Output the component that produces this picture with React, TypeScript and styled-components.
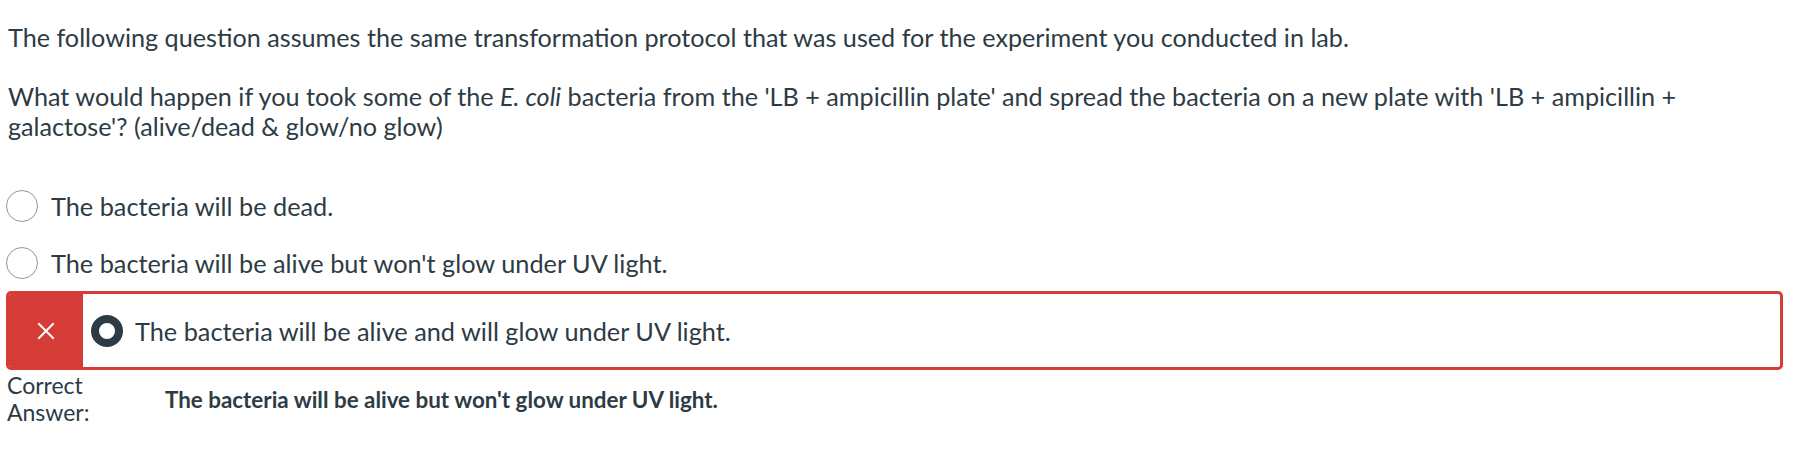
import React from 'react';
import styled, { createGlobalStyle } from 'styled-components';

const GlobalStyle = createGlobalStyle`
  html, body {
    margin: 0;
    padding: 0;
    background: #ffffff;
  }
  body {
    font-family: Lato, "Open Sans", "Liberation Sans", sans-serif;
    color: #2d3b45;
  }
`;

const answers = [
  { id: 'a1', text: 'The bacteria will be dead.' },
  { id: 'a2', text: "The bacteria will be alive but won't glow under UV light." },
];

export default function App() {
  return (
    <>
      <GlobalStyle />
      <Page>
        <Question>
          <Para>
            The following question assumes the same transformation protocol that was used for the
            experiment you conducted in lab.
          </Para>
          <Para>
            What would happen if you took some of the <em>E. coli</em> bacteria from the 'LB +
            ampicillin plate' and spread the bacteria on a new plate with 'LB + ampicillin +
            galactose'? (alive/dead &amp; glow/no glow)
          </Para>
        </Question>

        <AnswerList>
          {answers.map((a) => (
            <AnswerRow key={a.id}>
              <Radio />
              <AnswerText>{a.text}</AnswerText>
            </AnswerRow>
          ))}

          <WrongBox>
            <Arrow>
              <svg width="18" height="18" viewBox="0 0 18 18" aria-hidden="true">
                <path d="M2 2 L16 16 M16 2 L2 16" stroke="#fff" strokeWidth="2" strokeLinecap="square" />
              </svg>
            </Arrow>
            <WrongContent>
              <Radio $checked />
              <AnswerText>The bacteria will be alive and will glow under UV light.</AnswerText>
            </WrongContent>
          </WrongBox>

          <CorrectRow>
            <CorrectLabel>
              Correct
              <br />
              Answer:
            </CorrectLabel>
            <CorrectText>The bacteria will be alive but won't glow under UV light.</CorrectText>
          </CorrectRow>
        </AnswerList>
      </Page>
    </>
  );
}

const Page = styled.div`
  width: 1802px;
  height: 470px;
  box-sizing: border-box;
  padding: 22px 19px 0 6px;
  overflow: hidden;
`;

const Question = styled.div`
  display: flex;
  flex-direction: column;
  gap: 29px;
  padding-left: 2px;
  max-width: 1690px;
`;

const Para = styled.p`
  margin: 0;
  font-size: 25.2px;
  line-height: 30px;

  em {
    font-style: italic;
  }
`;

const AnswerList = styled.div`
  display: flex;
  flex-direction: column;
  margin-top: 36px;
`;

const AnswerRow = styled.div`
  display: flex;
  align-items: center;
  gap: 13px;
  height: 57px;
`;

const Radio = styled.span<{ $checked?: boolean }>`
  flex: none;
  box-sizing: border-box;
  width: 32px;
  height: 32px;
  border-radius: 50%;
  background: #fff;
  border: ${({ $checked }) => ($checked ? '8px solid #2d3b45' : '1px solid #8f979d')};
`;

const AnswerText = styled.span`
  font-size: 25.3px;
  line-height: 30px;
`;

const WrongBox = styled.div`
  display: flex;
  height: 79px;
  box-sizing: border-box;
  border: 3px solid #d63c37;
  border-radius: 5px;
  overflow: hidden;
`;

const Arrow = styled.div`
  flex: none;
  width: 74px;
  background: #d63c37;
  display: flex;
  align-items: center;
  justify-content: center;
`;

const WrongContent = styled.div`
  display: flex;
  align-items: center;
  gap: 12px;
  padding-left: 8px;
`;

const CorrectRow = styled.div`
  display: grid;
  grid-template-columns: 159px 1fr;
  align-items: center;
  padding-top: 2px;
`;

const CorrectLabel = styled.div`
  font-size: 23px;
  line-height: 27px;
  padding-left: 1px;
`;

const CorrectText = styled.div`
  font-size: 22.4px;
  font-weight: 700;
  line-height: 27px;
`;
